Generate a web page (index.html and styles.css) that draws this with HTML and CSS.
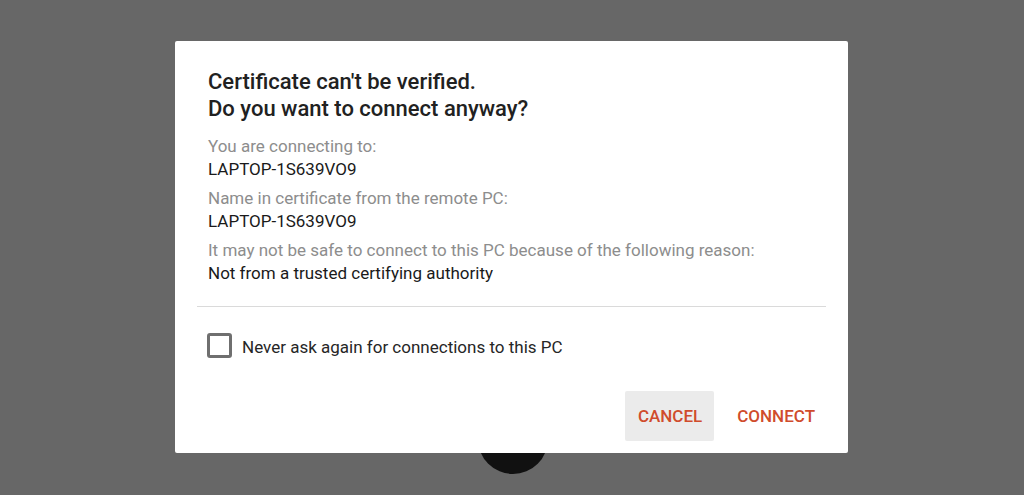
FILE: index.html
```html
<!DOCTYPE html>
<html>
<head>
<meta charset="utf-8">
<link rel="stylesheet" href="styles.css">
</head>
<body>
<div class="screen">
  <div class="fab"></div>
  <div class="dialog">
    <h1 class="title">Certificate can't be verified.<br>Do you want to connect anyway?</h1>
    <div class="info">
      <div class="label">You are connecting to:</div>
      <div class="value">LAPTOP-1S639VO9</div>
      <div class="label">Name in certificate from the remote PC:</div>
      <div class="value">LAPTOP-1S639VO9</div>
      <div class="label">It may not be safe to connect to this PC because of the following reason:</div>
      <div class="value">Not from a trusted certifying authority</div>
    </div>
    <div class="divider"></div>
    <label class="check">
      <span class="box"></span>
      <span class="check-text">Never ask again for connections to this PC</span>
    </label>
    <div class="actions">
      <button class="btn btn-cancel">CANCEL</button>
      <button class="btn">CONNECT</button>
    </div>
  </div>
</div>
</body>
</html>
```

FILE: styles.css
```css
html, body {
  margin: 0;
  padding: 0;
  height: 100%;
}
body {
  background: #676767;
  font-family: Roboto, "Liberation Sans", sans-serif;
  overflow: hidden;
}
.screen {
  position: relative;
  height: 495px;
  display: flex;
  align-items: flex-start;
  justify-content: center;
}
.fab {
  position: absolute;
  left: 478px;
  top: 404px;
  width: 70px;
  height: 70px;
  border-radius: 50%;
  background: #111;
}
.dialog {
  position: relative;
  width: 673px;
  height: 412px;
  box-sizing: border-box;
  background: #fff;
  border-radius: 2px;
  margin-top: 41px;
  padding: 27px 22px 0 22px;
  margin-left: -1px;
}
.title {
  margin: 0 11px;
  font-size: 22px;
  font-weight: 500;
  line-height: 27px;
  color: #212121;
}
.info {
  margin: 13px 11px 0;
}
.label {
  font-size: 17px;
  line-height: 23px;
  color: #8d8d8d;
  margin-top: 6px;
}
.label:first-child {
  margin-top: 0;
}
.value {
  font-size: 17px;
  line-height: 23px;
  color: #1a1a1a;
}
.divider {
  height: 1px;
  background: #dadada;
  margin-top: 21px;
}
.check {
  display: flex;
  align-items: center;
  height: 25px;
  margin: 26px 11px 0 10px;
}
.box {
  width: 19px;
  height: 19px;
  border: 3px solid #6f6f6f;
  border-radius: 3px;
  flex: none;
}
.check-text {
  margin-left: 10px;
  font-size: 17px;
  line-height: 24px;
  padding-top: 2px;
  color: #262626;
}
.actions {
  display: flex;
  justify-content: flex-end;
  gap: 11px;
  margin-top: 33px;
  margin-right: -1px;
}
.btn {
  border: none;
  background: transparent;
  font-family: Roboto, "Liberation Sans", sans-serif;
  font-size: 17px;
  font-weight: 500;
  color: #d04c2c;
  padding: 0 12px;
  height: 50px;
  border-radius: 2px;
}
.btn-cancel {
  background: #ebebeb;
  padding: 0 12px 0 13px;
}
```
